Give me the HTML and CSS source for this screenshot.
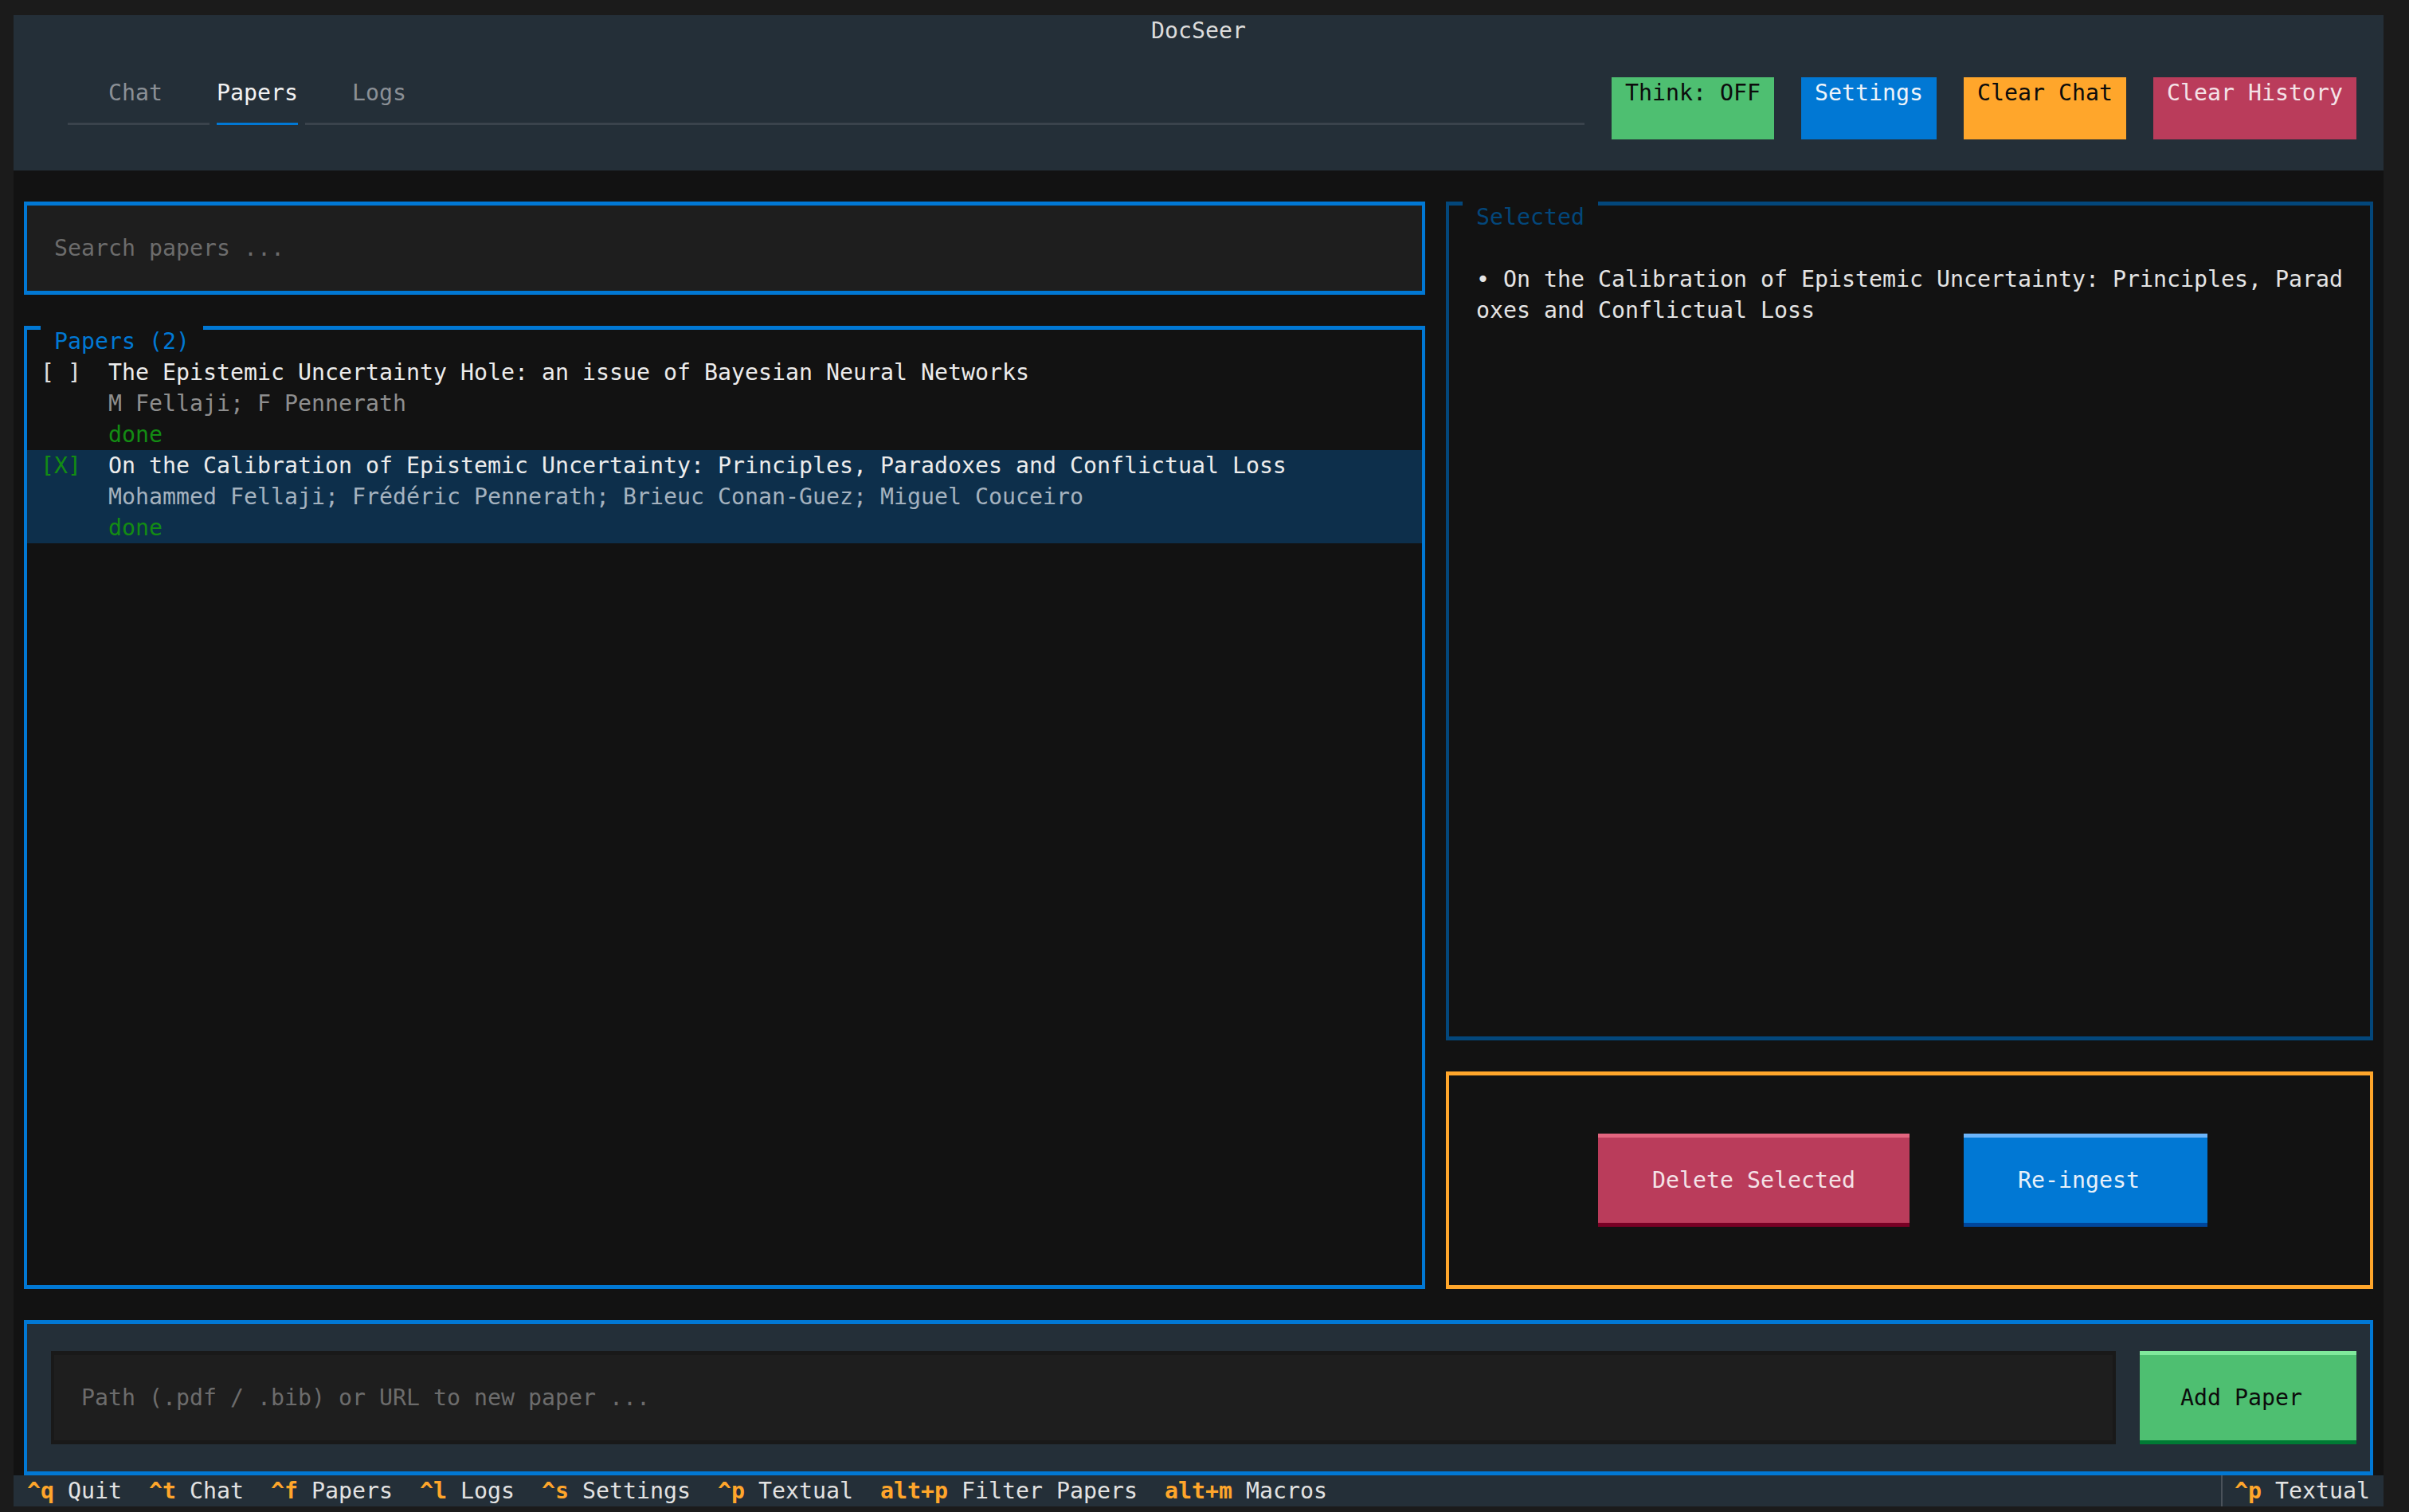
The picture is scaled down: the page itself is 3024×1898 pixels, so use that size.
FILE: index.html
```html
<!DOCTYPE html>
<html lang="en">
<head>
    <meta charset="UTF-8">
    <meta name="viewport" content="width=device-width, initial-scale=1.0">
    <title>DocSeer</title>
    <link rel="stylesheet" href="styles.css">
</head>
<body>
    <div class="app">
        <header class="header">
            <div class="title">DocSeer</div>
            <div class="topbar">
                <div class="tabs">
                    <div class="tab-labels">
                        <span class="tab">Chat</span>
                        <span class="tab active">Papers</span>
                        <span class="tab">Logs</span>
                    </div>
                    <div class="underline">
                        <span class="line line-left"></span>
                        <span class="line line-active"></span>
                        <span class="line line-right"></span>
                    </div>
                </div>
                <div class="top-buttons">
                    <button class="btn-flat flat-green">Think: OFF</button>
                    <button class="btn-flat flat-blue">Settings</button>
                    <button class="btn-flat flat-orange">Clear Chat</button>
                    <button class="btn-flat flat-red">Clear History</button>
                </div>
            </div>
        </header>

        <main class="main">
            <div class="left-col">
                <div class="search tall border-blue">
                    <span class="placeholder">Search papers ...</span>
                </div>

                <div class="papers tall border-blue">
                    <div class="box-title title-blue">Papers (2)</div>

                    <div class="paper-item">
                        <div class="check">[ ]</div>
                        <div class="paper-text">
                            <div class="paper-title">The Epistemic Uncertainty Hole: an issue of Bayesian Neural Networks</div>
                            <div class="paper-authors">M Fellaji; F Pennerath</div>
                            <div class="paper-status">done</div>
                        </div>
                    </div>

                    <div class="paper-item selected">
                        <div class="check checked">[X]</div>
                        <div class="paper-text">
                            <div class="paper-title">On the Calibration of Epistemic Uncertainty: Principles, Paradoxes and Conflictual Loss</div>
                            <div class="paper-authors">Mohammed Fellaji; Frédéric Pennerath; Brieuc Conan-Guez; Miguel Couceiro</div>
                            <div class="paper-status">done</div>
                        </div>
                    </div>
                </div>
            </div>

            <div class="right-col">
                <div class="selected-box tall border-navy">
                    <div class="box-title title-navy">Selected</div>
                    <div class="selected-text">• On the Calibration of Epistemic Uncertainty: Principles, Paradoxes and Conflictual Loss</div>
                </div>

                <div class="actions tall border-orange">
                    <button class="btn btn-red btn-delete">Delete Selected</button>
                    <button class="btn btn-blue btn-reingest">Re-ingest</button>
                </div>
            </div>
        </main>

        <div class="add-bar tall border-blue">
            <div class="path-input tall border-dark">
                <span class="placeholder">Path (.pdf / .bib) or URL to new paper ...</span>
            </div>
            <button class="btn btn-green btn-add">Add Paper</button>
        </div>

        <footer class="footer">
            <div class="footer-keys"> <span class="key">^q</span> Quit  <span class="key">^t</span> Chat  <span class="key">^f</span> Papers  <span class="key">^l</span> Logs  <span class="key">^s</span> Settings  <span class="key">^p</span> Textual  <span class="key">alt+p</span> Filter Papers  <span class="key">alt+m</span> Macros</div>
            <div class="footer-right"> <span class="key">^p</span> Textual</div>
        </footer>
    </div>
</body>
</html>
```

FILE: styles.css
```css
/* terminal grid: one cell = 17px x 39px */
* {
    box-sizing: border-box;
}
body {
    margin: 0;
    background-color: #1b1b1b;
    font-family: "DejaVu Sans Mono", "Liberation Mono", monospace;
    font-size: 28.24px;
    line-height: 39px;
    color: #e0e0e0;
}
.app {
    margin: 19px 0 0 17px;
    width: 2975px;
    height: 1872px;
    background-color: #121212;
    display: flex;
    flex-direction: column;
}

/* header */
.header {
    height: 195px;
    background-color: #242f38;
}
.title {
    height: 39px;
    text-align: center;
    color: #dcdcdc;
}
.topbar {
    display: flex;
    height: 156px;
    padding: 39px 0 0 68px;
}
.tabs {
    width: 1904px;
    height: 78px;
}
.tab-labels {
    display: flex;
    height: 39px;
    padding-left: 17px;
}
.tab {
    padding: 0 34px;
    color: #8b9096;
}
.tab.active {
    color: #f2f2f2;
}
.underline {
    display: flex;
    height: 39px;
    padding-top: 18px;
}
.line {
    height: 3px;
    background-color: #3a434c;
}
.line-left {
    width: 178px;
}
.line-active {
    width: 102px;
    margin: 0 9px;
    background-color: #0178d4;
}
.line-right {
    flex: 1;
}
.top-buttons {
    display: flex;
    gap: 34px;
    margin-left: 34px;
}
.btn-flat {
    height: 78px;
    padding: 0 17px 39px;
    border: none;
    font: inherit;
    line-height: 39px;
    text-align: left;
}
.flat-green {
    background-color: #4ebf71;
    color: #0c0c0c;
}
.flat-blue {
    background-color: #0178d4;
    color: #eef4fa;
}
.flat-orange {
    background-color: #ffa62b;
    color: #0c0c0c;
}
.flat-red {
    background-color: #ba3c5b;
    color: #f4e2e7;
}

/* "tall" borders: thin strips on the inner edges of the outer cells */
.tall {
    margin: 0 13px;
    border-style: solid;
    border-width: 5px 4px;
}
.border-blue {
    border-color: #0178d4;
}
.border-navy {
    border-color: #03477b;
}
.border-orange {
    border-color: #ffa62b;
}
.border-dark {
    border-color: #191919;
}
.box-title {
    position: absolute;
    top: -5px;
    left: 17px;
    height: 39px;
    padding: 0 17px;
    background-color: #121212;
}
.title-blue {
    color: #0178d4;
}
.title-navy {
    color: #03477b;
}
.placeholder {
    color: #6c6c6c;
}

/* main area */
.main {
    display: flex;
    height: 1404px;
    padding-top: 39px;
}
.left-col {
    width: 1785px;
    display: flex;
    flex-direction: column;
}
.right-col {
    width: 1190px;
    display: flex;
    flex-direction: column;
}
.search {
    height: 117px;
    margin-bottom: 39px;
    padding: 34px 0 0 34px;
    background-color: #1e1e1e;
}
.papers {
    position: relative;
    flex: 1;
    padding-top: 34px;
}
.paper-item {
    display: flex;
    height: 117px;
}
.paper-item.selected {
    background-color: #0d2f4b;
}
.check {
    width: 102px;
    padding-left: 17px;
    color: #e0e0e0;
}
.check.checked {
    color: #138c13;
}
.paper-title {
    white-space: nowrap;
    color: #ececec;
}
.paper-authors {
    white-space: nowrap;
    color: #8e8e8e;
}
.selected .paper-authors {
    color: #a4b2bf;
}
.paper-status {
    color: #138c13;
}

.selected-box {
    position: relative;
    height: 1053px;
    margin-bottom: 39px;
    padding: 73px 0 0 34px;
}
.selected-text {
    width: 1090px;
    word-break: break-all;
    color: #e4e4e4;
}
.actions {
    height: 273px;
    display: flex;
    align-items: flex-start;
    gap: 68px;
    padding: 73px 0 0 187px;
}

/* buttons with light top / dark bottom edge */
.btn {
    height: 117px;
    display: flex;
    align-items: center;
    border: none;
    border-top: 5px solid;
    border-bottom: 5px solid;
    font: inherit;
    line-height: 39px;
}
.btn-red {
    background-color: #ba3c5b;
    border-top-color: #e2657f;
    border-bottom-color: #780024;
    color: #f4e2e7;
}
.btn-blue {
    background-color: #0178d4;
    border-top-color: #6cb5fa;
    border-bottom-color: #00469b;
    color: #e8f1fa;
}
.btn-green {
    background-color: #4ebf71;
    border-top-color: #80e99c;
    border-bottom-color: #007a34;
    color: #0c0c0c;
}
.btn-delete {
    padding: 0 68px;
}
.btn-reingest {
    padding: 0 85px 0 68px;
}
.btn-add {
    margin-left: 17px;
    padding: 0 68px 0 51px;
}

/* add paper bar */
.add-bar {
    height: 195px;
    margin-top: 39px;
    display: flex;
    align-items: flex-start;
    padding: 34px 0 0 17px;
    background-color: #242f38;
}
.path-input {
    width: 2592px;
    height: 117px;
    padding: 34px 0 0 34px;
    background-color: #1e1e1e;
}

/* footer */
.footer {
    display: flex;
    height: 39px;
    background-color: #242f38;
    white-space: pre;
    color: #e2e2e2;
}
.footer-keys {
    flex: 1;
}
.footer-right {
    width: 204px;
    box-shadow: inset 2px 0 #4a525a;
}
.key {
    color: #ffa62b;
    font-weight: bold;
}
```
